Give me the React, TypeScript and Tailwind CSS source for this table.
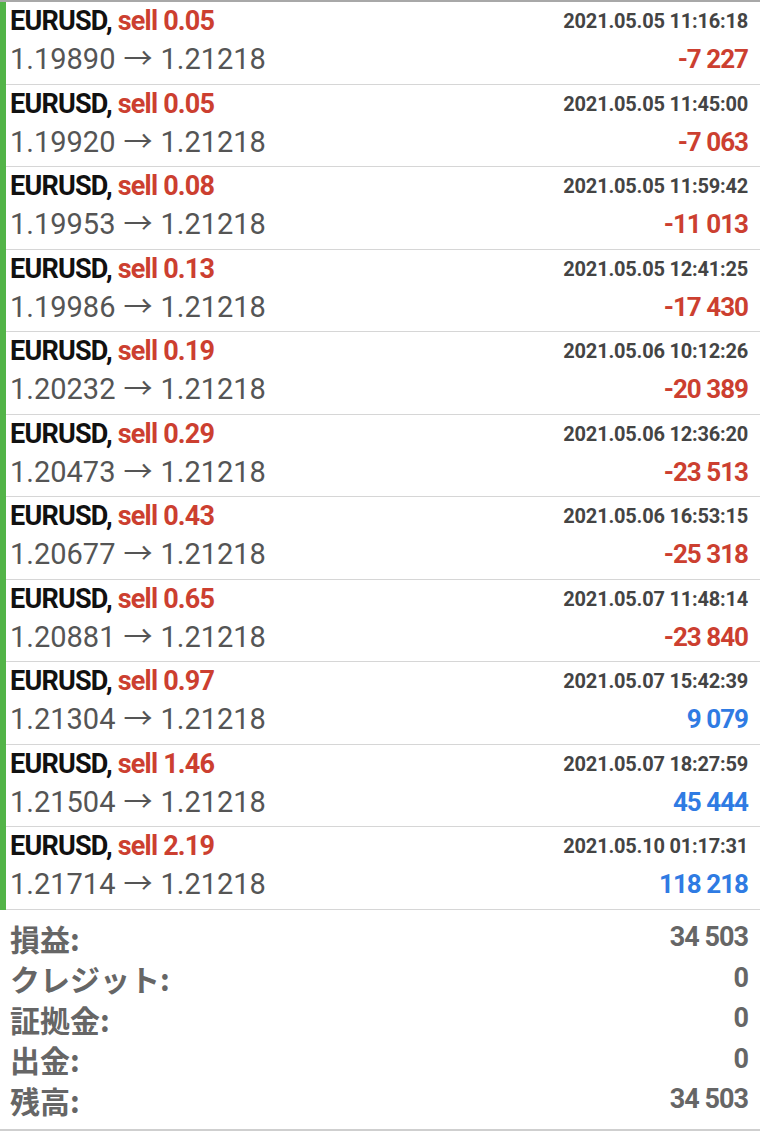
import React from "react";

type Trade = {
  lots: string;
  open: string;
  time: string;
  profit: string;
};

const trades: Trade[] = [
  { lots: "0.05", open: "1.19890", time: "2021.05.05 11:16:18", profit: "-7 227" },
  { lots: "0.05", open: "1.19920", time: "2021.05.05 11:45:00", profit: "-7 063" },
  { lots: "0.08", open: "1.19953", time: "2021.05.05 11:59:42", profit: "-11 013" },
  { lots: "0.13", open: "1.19986", time: "2021.05.05 12:41:25", profit: "-17 430" },
  { lots: "0.19", open: "1.20232", time: "2021.05.06 10:12:26", profit: "-20 389" },
  { lots: "0.29", open: "1.20473", time: "2021.05.06 12:36:20", profit: "-23 513" },
  { lots: "0.43", open: "1.20677", time: "2021.05.06 16:53:15", profit: "-25 318" },
  { lots: "0.65", open: "1.20881", time: "2021.05.07 11:48:14", profit: "-23 840" },
  { lots: "0.97", open: "1.21304", time: "2021.05.07 15:42:39", profit: "9 079" },
  { lots: "1.46", open: "1.21504", time: "2021.05.07 18:27:59", profit: "45 444" },
  { lots: "2.19", open: "1.21714", time: "2021.05.10 01:17:31", profit: "118 218" },
];

const summary = [
  { label: "損益:", value: "34 503" },
  { label: "クレジット:", value: "0" },
  { label: "証拠金:", value: "0" },
  { label: "出金:", value: "0" },
  { label: "残高:", value: "34 503" },
];

const cond = "font-['Roboto',sans-serif] font-bold";

const TradeRow = ({ t }: { t: Trade }) => {
  const loss = t.profit.startsWith("-");
  return (
    <div className="flex h-[82.5px] border-b border-[#d6d6d6] pl-[4px] pr-[12px]">
      <div className="flex flex-1 flex-col pt-[4px]">
        <div className={`${cond} text-[27px] leading-[30px] tracking-[-0.8px] text-[#111]`}>
          EURUSD, <span className="text-[#cc3f30]">sell {t.lots}</span>
        </div>
        <div className="mt-[5px] h-[36px] font-['Roboto',sans-serif] text-[29px] leading-[36px] text-[#555]">
          {t.open}
          <span className="mx-[8px] font-['Noto_Sans_CJK_JP',sans-serif] text-[29px] font-normal leading-none">
            →
          </span>
          1.21218
        </div>
      </div>
      <div className="flex flex-col items-end pt-[7px]">
        <div className={`${cond} text-[20px] leading-[24px] tracking-[-0.2px] text-[#444]`}>
          {t.time}
        </div>
        <div
          className={`${cond} mt-[11px] text-[26px] leading-[30px] tracking-[-1px] ${
            loss ? "text-[#cc3f30]" : "text-[#2f7be3]"
          }`}
        >
          {t.profit}
        </div>
      </div>
    </div>
  );
};

export default function App() {
  return (
    <div className="h-[1131px] w-[760px] overflow-hidden bg-white">
      <div className="border-t-2 border-[#a8a8a8]">
        <div className="border-l-[6px] border-[#52b447]">
          {trades.map((t) => (
            <TradeRow key={t.time} t={t} />
          ))}
        </div>
      </div>
      <div className="border-b-2 border-[#cfcfcf] pb-[9px] pl-[10px] pr-[12px] pt-[8px]">
        {summary.map((s) => (
          <div key={s.label} className="flex h-[40.5px] items-center justify-between">
            <span className="font-['Noto_Sans_CJK_JP',sans-serif] text-[30px] font-bold leading-none text-[#666]">
              {s.label}
            </span>
            <span className={`${cond} text-[27px] leading-none tracking-[-1px] text-[#666]`}>
              {s.value}
            </span>
          </div>
        ))}
      </div>
    </div>
  );
}
